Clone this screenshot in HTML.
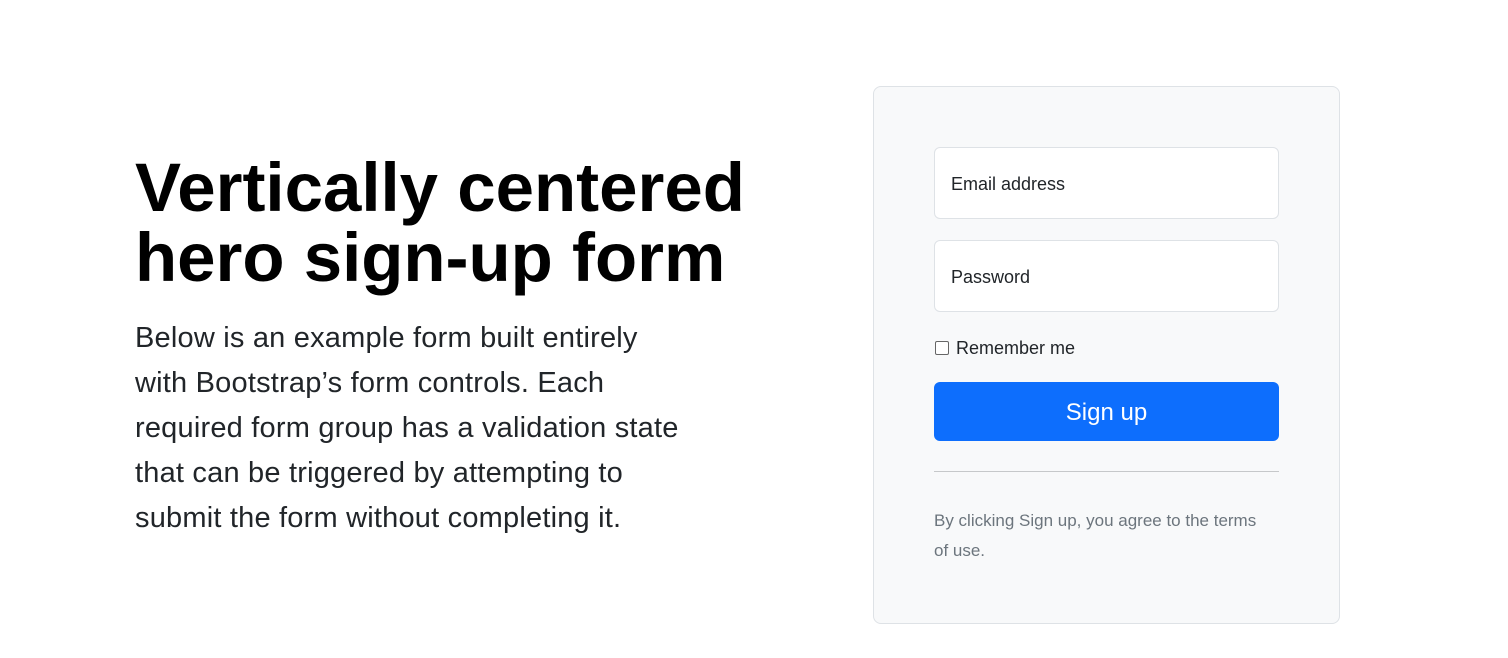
<!DOCTYPE html>
<html><head><style>
body{margin:0;width:1508px;height:658px;background:#fff;font-family:"Liberation Sans",sans-serif;color:#212529;position:relative;overflow:hidden}
h1{position:absolute;left:135px;top:153px;margin:0;font-size:69px;line-height:70px;font-weight:bold;color:#000;letter-spacing:0;white-space:nowrap}
.lead{position:absolute;left:135px;top:316px;margin:0;font-size:29px;line-height:45px;font-weight:300;white-space:nowrap;letter-spacing:0.2px}
.card{position:absolute;left:873px;top:86px;width:467px;height:538px;background:#f8f9fa;border:1px solid #dee2e6;border-radius:8px;box-sizing:border-box}
.inp{position:absolute;left:60px;width:345px;height:72px;background:#fff;border:1px solid #dee2e6;border-radius:6px;box-sizing:border-box;font-size:18px;padding-left:16px;line-height:72px}
.cb{position:absolute;left:61px;top:254px;width:12px;height:12px;border:1px solid #666;border-radius:2px;background:#fff}
.cbl{position:absolute;left:82px;top:251px;font-size:18px}
.btn{position:absolute;left:60px;top:295px;width:345px;height:59px;background:#0d6efd;border-radius:6px;color:#fff;font-size:24px;text-align:center;line-height:61px}
.hr{position:absolute;left:60px;top:384px;width:345px;border-top:1px solid #c6c8ca}
.small{position:absolute;left:60px;top:419px;width:345px;font-size:17px;line-height:30px;color:#6c757d}
</style></head><body>
<h1>Vertically centered<br>hero sign-up form</h1>
<p class="lead">Below is an example form built entirely<br>with Bootstrap’s form controls. Each<br>required form group has a validation state<br>that can be triggered by attempting to<br>submit the form without completing it.</p>
<div class="card">
<div class="inp" style="top:60px">Email address</div>
<div class="inp" style="top:153px">Password</div>
<div class="cb"></div><div class="cbl">Remember me</div>
<div class="btn">Sign up</div>
<div class="hr"></div>
<div class="small">By clicking Sign up, you agree to the terms<br>of use.</div>
</div>
</body></html>
